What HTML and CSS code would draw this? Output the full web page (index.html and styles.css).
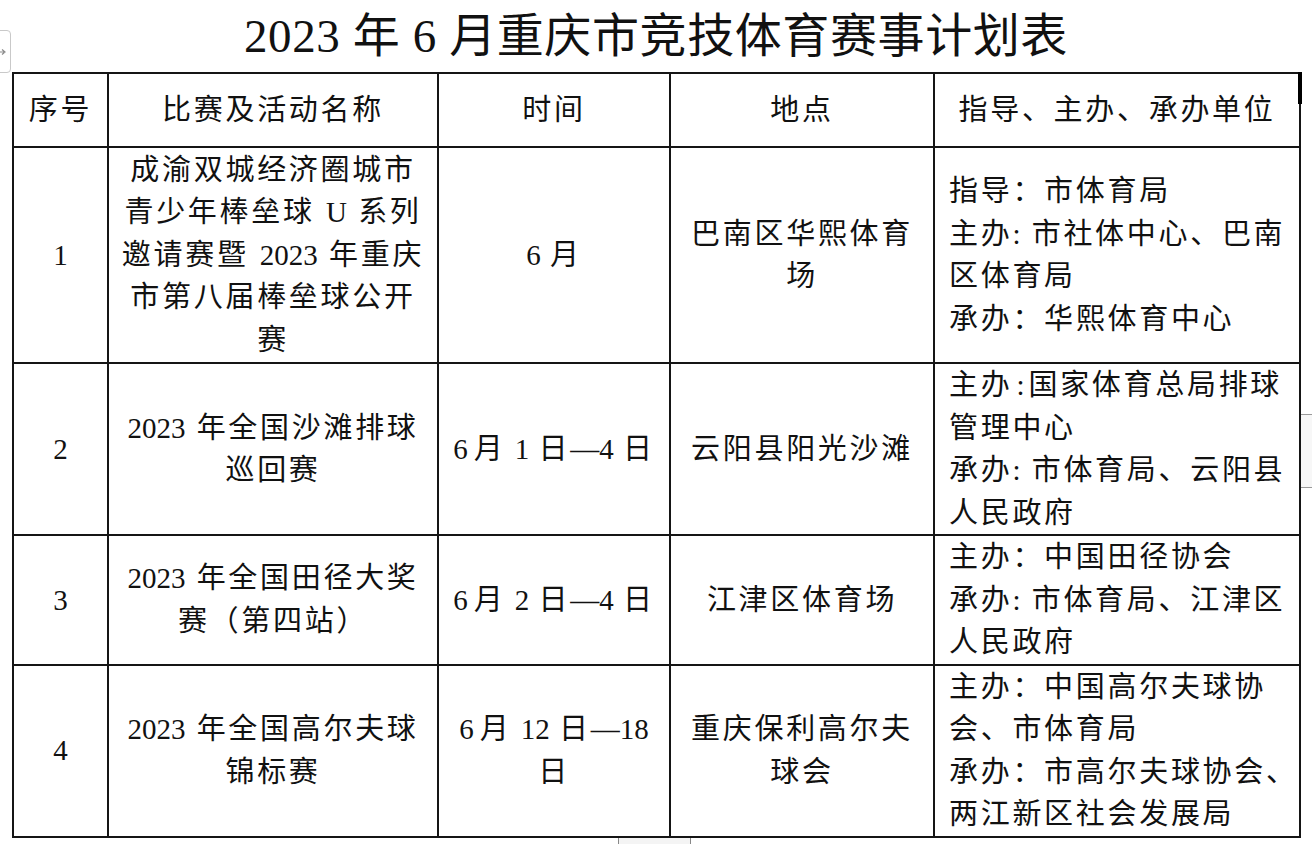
FILE: index.html
```html
<!DOCTYPE html>
<html lang="zh-CN">
<head>
<meta charset="utf-8">
<title>2023年6月重庆市竞技体育赛事计划表</title>
<link rel="stylesheet" href="styles.css">
</head>
<body>
<div class="page">
  <h1 class="title">2023 年 6 月重庆市竞技体育赛事计划表</h1>
  <table class="plan">
    <colgroup>
      <col class="c-no"><col class="c-name"><col class="c-time"><col class="c-place"><col class="c-org">
    </colgroup>
    <thead>
      <tr>
        <th>序号</th>
        <th>比赛及活动名称</th>
        <th>时间</th>
        <th>地点</th>
        <th>指导、主办、承办单位</th>
      </tr>
    </thead>
    <tbody>
      <tr class="r1">
        <td class="no"><span class="num">1</span></td>
        <td class="ctr">成渝双城经济圈城市<br>青少年棒垒球<span class="num"> U </span>系列<br>邀请赛暨<span class="num"> 2023 </span>年重庆<br>市第八届棒垒球公开<br>赛</td>
        <td class="ctr"><span class="num tight">6 </span>月</td>
        <td class="ctr">巴南区华熙体育<br>场</td>
        <td class="org">指导：市体育局<br>主办<span class="num">: </span>市社体中心、巴南<br>区体育局<br>承办：华熙体育中心</td>
      </tr>
      <tr>
        <td class="no"><span class="num">2</span></td>
        <td class="ctr"><span class="num">2023 </span>年全国沙滩排球<br>巡回赛</td>
        <td class="ctr time"><span class="num six">6</span>月<span class="num tight"> 1 </span>日<span class="num tight">—4 </span>日</td>
        <td class="ctr">云阳县阳光沙滩</td>
        <td class="org">主办<span class="num colon">:</span>国家体育总局排球<br>管理中心<br>承办<span class="num">: </span>市体育局、云阳县<br>人民政府</td>
      </tr>
      <tr>
        <td class="no"><span class="num">3</span></td>
        <td class="ctr"><span class="num">2023 </span>年全国田径大奖<br>赛（第四站）</td>
        <td class="ctr time"><span class="num six">6</span>月<span class="num tight"> 2 </span>日<span class="num tight">—4 </span>日</td>
        <td class="ctr">江津区体育场</td>
        <td class="org">主办：中国田径协会<br>承办<span class="num">: </span>市体育局、江津区<br>人民政府</td>
      </tr>
      <tr>
        <td class="no"><span class="num">4</span></td>
        <td class="ctr"><span class="num">2023 </span>年全国高尔夫球<br>锦标赛</td>
        <td class="ctr time"><span class="num six">6</span>月<span class="num tight"> 12 </span>日<span class="num tight">—18</span><br>日</td>
        <td class="ctr">重庆保利高尔夫<br>球会</td>
        <td class="org">主办：中国高尔夫球协<br>会、市体育局<br>承办：市高尔夫球协会、<br>两江新区社会发展局</td>
      </tr>
    </tbody>
  </table>
  <div class="edge-tab" aria-hidden="true">
    <svg class="edge-arrow" width="6" height="8" viewBox="0 0 6 8"><path d="M0 4 H4 M2 1.5 L5 4 L2 6.5" fill="none" stroke="#8a8a8a" stroke-width="1.2"/></svg>
  </div>
  <div class="edge-bar" aria-hidden="true"></div>
  <div class="edge-scroll" aria-hidden="true"></div>
  <div class="foot-tab" aria-hidden="true"></div>
</div>
</body>
</html>
```
FILE: styles.css
```css
html, body {
  margin: 0;
  padding: 0;
  background: #ffffff;
}

.page {
  position: relative;
  width: 1312px;
  height: 844px;
  overflow: hidden;
  font-family: "Liberation Serif", "Noto Sans CJK SC", serif;
  color: #111;
}

.title {
  margin: 0;
  height: 72px;
  display: flex;
  align-items: center;
  justify-content: center;
  font-size: 47px;
  font-weight: normal;
  letter-spacing: 0.6px;
  line-height: 1;
  color: #111;
}

.plan {
  margin-left: 12px;
  width: 1287px;
  border-collapse: collapse;
  table-layout: fixed;
  font-size: 29px;
  letter-spacing: 2.7px;
}

.num {
  letter-spacing: 0;
  word-spacing: 4px;
}

.num.tight {
  word-spacing: 2px;
}

.num.six {
  display: inline-block;
  padding-right: 6px;
}

.num.colon {
  padding: 0 4px;
}

.c-no { width: 95px; }
.c-name { width: 330px; }
.c-time { width: 232px; }
.c-place { width: 264px; }
.c-org { width: 366px; }

.plan th,
.plan td {
  border: 2px solid #151515;
  padding: 0;
  line-height: 42.5px;
  vertical-align: middle;
  white-space: nowrap;
  font-weight: normal;
}

.plan th {
  height: 71px;
  text-align: center;
  padding-top: 1px;
}

.plan td.no,
.plan td.ctr {
  text-align: center;
}

.plan td.org {
  text-align: left;
  padding-left: 14px;
}

.plan tr.r1 td { height: 214px; }

.edge-tab {
  position: absolute;
  left: -6px;
  top: 30px;
  width: 15px;
  height: 41px;
  border: 1px solid #c9c9c9;
  border-radius: 4px;
  background: #fff;
  display: flex;
  align-items: center;
  justify-content: flex-start;
}

.edge-arrow {
  display: block;
  margin-left: 5px;
}

.edge-bar {
  position: absolute;
  left: 1298px;
  top: 72px;
  width: 4px;
  height: 32px;
  background: #000;
}

.edge-scroll {
  position: absolute;
  left: 1301px;
  top: 414px;
  width: 11px;
  height: 72px;
  border-top: 1px solid #9a9a9a;
  border-bottom: 1px solid #9a9a9a;
  background: #f7f7f7;
}

.foot-tab {
  position: absolute;
  left: 618px;
  top: 838px;
  width: 71px;
  height: 8px;
  border-left: 1px solid #888;
  border-right: 1px solid #888;
  background: #f4f4f4;
}
```
